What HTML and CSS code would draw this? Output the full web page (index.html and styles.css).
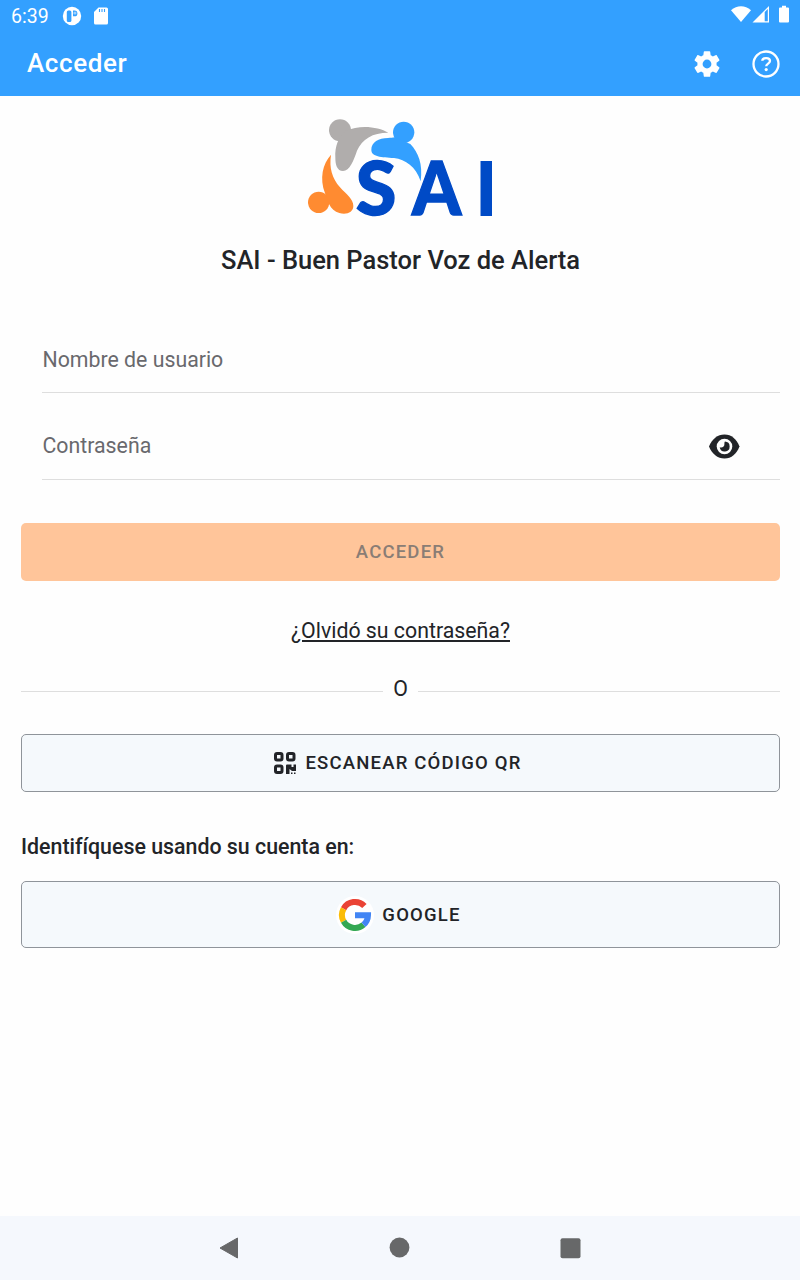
FILE: index.html
```html
<!DOCTYPE html>
<html lang="es">
<head>
  <meta charset="UTF-8">
  <meta name="viewport" content="width=device-width, initial-scale=1.0">
  <title>Acceder</title>
  <link rel="stylesheet" href="styles.css">
</head>
<body>
  <header class="header">
    <div class="status-bar">
      <span class="clock">6:39</span>
      <svg class="icon-app" width="20" height="20" viewBox="0 0 20 20">
        <circle cx="10" cy="10" r="9.2" fill="#fff"/>
        <rect x="4.8" y="4.5" width="4.6" height="11.5" rx="1.5" fill="#33a0ff"/>
        <path d="M11 4.5h1.500a2.900 2.900 0 0 1 0 5.800H11z" fill="#33a0ff"/>
        <circle cx="13" cy="7" r="1.6" fill="#9bd0ff"/>
      </svg>
      <svg class="icon-card" width="16" height="18" viewBox="0 0 16 18">
        <path d="M5.500.5h8a1.500 1.500 0 0 1 1.500 1.500v14a1.500 1.500 0 0 1-1.500 1.500h-11A1.500 1.500 0 0 1 1 16V5z" fill="#fff"/>
        <path d="M6.500 2v3M9 2v3M11.500 2v3" stroke="#33a0ff" stroke-width="1.1"/>
      </svg>
      <svg class="icon-signal" width="60" height="20" viewBox="0 0 60 20">
        <path d="M1 5.200C7-.1 15-.1 21 5.200L11 17z" fill="#fff"/>
        <path d="M22.500 17.500 39 1v16.500z" fill="#fff"/>
        <path d="M34.700 7 37.800 4v12.300h-3.100z" fill="#33a0ff"/>
        <path d="M49 3.500q0-1 1-1h2V.8h4v1.700h2q1 0 1 1v13q0 1-1 1h-8q-1 0-1-1z" fill="#fff"/>
      </svg>
    </div>
    <div class="toolbar">
      <h1>Acceder</h1>
      <svg class="icon-gear" width="32" height="32" viewBox="0 0 24 24">
        <path fill="#fff" d="M19.140 12.940c.04-.3.060-.61.060-.94 0-.32-.02-.64-.07-.94l2.030-1.580c.18-.14.230-.41.120-.61l-1.920-3.320c-.12-.22-.37-.29-.59-.22l-2.390.96c-.5-.38-1.030-.7-1.620-.94l-.36-2.540c-.04-.24-.24-.41-.48-.41h-3.840c-.24 0-.43.170-.47.410l-.36 2.540c-.59.240-1.130.570-1.620.94l-2.390-.96c-.22-.08-.47 0-.59.220L2.740 8.870c-.12.210-.08.470.12.610l2.030 1.580c-.05.300-.09.630-.09.940s.020.640.070.940l-2.030 1.580c-.18.140-.23.410-.12.610l1.920 3.320c.12.220.37.290.59.220l2.390-.96c.5.380 1.030.7 1.620.940l.36 2.540c.05.240.24.410.48.410h3.840c.24 0 .44-.17.470-.41l.36-2.540c.59-.24 1.130-.56 1.620-.94l2.390.96c.22.080.47 0 .59-.22l1.920-3.320c.12-.22.070-.47-.12-.61zM12 15.300A3.300 3.300 0 1 1 12 8.700a3.300 3.300 0 0 1 0 6.600z"/>
      </svg>
      <svg class="icon-help" width="28" height="28" viewBox="0 0 28 28" fill="none" stroke="#fff">
        <circle cx="14" cy="14" r="12.5" stroke-width="2.3"/>
        <path d="M10.300 10.800C10.400 7.300 18 7.200 18 11c0 2.700-3.800 2.500-3.800 5.300" stroke-width="2.3"/>
        <circle cx="14.2" cy="19.6" r="1.6" fill="#fff" stroke="none"/>
      </svg>
    </div>
  </header>

  <main class="login">
    <svg class="logo" width="210" height="125" viewBox="2 0 630 375">
      <g fill="#b0adac">
        <circle cx="134" cy="76" r="33"/>
        <path d="M120 158c-2-35 10-62 30-80 46-20 98-12 129 5-48 0-78 19-94 54-10 30-22 60-42 61-18 0-23-20-23-40z"/>
      </g>
      <g fill="#33a0ff">
        <circle cx="325" cy="82" r="32"/>
        <path d="M228 134c0-22 22-35 50-35 8 0 14-1 20-2l47 20c24 25 38 60 31 112-15-45-45-65-80-70-38-3-68-3-68-25z"/>
      </g>
      <g fill="#ff8b31">
        <circle cx="70" cy="292" r="32"/>
        <path d="M107 149c-6 40 3 70 27 98 20 22 40 36 40 56 0 18-20 28-42 21-14-4-24-13-31-27l-12-32C72 220 82 176 107 149z"/>
      </g>
      <g class="logo-text">
        <text class="logo-s" x="181" y="330" textLength="122" lengthAdjust="spacingAndGlyphs">S</text>
        <text class="logo-a" x="350" y="330" textLength="148" lengthAdjust="spacingAndGlyphs">A</text>
        <text x="538" y="332">I</text>
      </g>
    </svg>
    <h2>SAI - Buen Pastor Voz de Alerta</h2>

    <form>
      <div class="field">
        <span>Nombre de usuario</span>
      </div>
      <div class="field field-password">
        <span>Contraseña</span>
        <svg class="icon-eye" width="32" height="26" viewBox="0 0 32 26">
          <path d="M1 13.500C4 6 9.500 1.500 16.500 1.500s12 4.500 15 12c-3 7.500-8 12-15 12S4 21 1 13.500z" fill="#222428"/>
          <circle cx="16.5" cy="13.5" r="7.8" fill="#fff"/>
          <path d="M16.900 8.500a5 5 0 1 1-5.200 5.800c2.300 1 5.200-.8 4.700-3.500-.1-.9.100-1.500.5-2.300z" fill="#222428"/>
        </svg>
      </div>
      <button type="button" class="btn btn-login" disabled>Acceder</button>
    </form>

    <a class="forgot">¿Olvidó su contraseña?</a>

    <div class="divider"><span>O</span></div>

    <button type="button" class="btn btn-qr">
      <svg width="24" height="24" viewBox="0 0 24 24" fill="none" stroke="#222428" stroke-width="3">
        <rect x="2.5" y="2.5" width="6.5" height="6.5" rx="1.5"/>
        <rect x="14.5" y="2.5" width="6.500" height="6.5" rx="1.5"/>
        <rect x="2.5" y="15" width="6.5" height="6.5" rx="1.5"/>
        <path d="M13 23V14.500q0-1 1-1h4.500V16h2v-2.500H23V20h-4l-2.500-2v5zM18 21.500h1.500V23H18zM21 21.500h1.500V23H21z" fill="#222428" stroke="none"/>
      </svg>
      Escanear código QR
    </button>

    <h3>Identifíquese usando su cuenta en:</h3>

    <button type="button" class="btn btn-google">
      <svg width="34" height="34" viewBox="0 0 34 34" fill="none" stroke-width="6">
        <circle cx="17" cy="17" r="19" fill="#fff"/>
        <path d="M26.400 8A13 13 0 0 0 5.600 10.700" stroke="#ea4335"/>
        <path d="M5.600 10.700a13 13 0 0 0 0 12.600" stroke="#fbbc05"/>
        <path d="M5.600 23.300A13 13 0 0 0 25.500 26.800" stroke="#34a853"/>
        <path d="M25.500 26.800A13 13 0 0 0 30 17.200H17" stroke="#4285f4"/>
      </svg>
      Google
    </button>
  </main>

  <nav class="nav-bar">
    <svg width="20" height="22" viewBox="0 0 20 22"><path d="M1 11 18.500 1v20z" fill="#676869" stroke="#676869" stroke-linejoin="round"/></svg>
    <svg width="20" height="20" viewBox="0 0 20 20"><circle cx="9.5" cy="9.5" r="9.9" fill="#676869"/></svg>
    <svg width="20" height="20" viewBox="0 0 20 20"><rect x="-0.5" y="0.3" width="20" height="20" rx="2" fill="#676869"/></svg>
  </nav>
</body>
</html>
```
FILE: styles.css
```css
body {
  font-family: Roboto, "Liberation Sans", sans-serif;
  background-color: #fefefe;
  color: #222428;
  margin: 0;
  height: 1280px;
  display: flex;
  flex-direction: column;
}

svg {
  display: block;
  flex: none;
  overflow: visible;
}

.header {
  background-color: #33a0ff;
  color: #fff;
  height: 96px;
}

.status-bar {
  display: flex;
  align-items: center;
  height: 32px;
  padding: 0 10px 0 11px;
}

.clock {
  font-size: 19.5px;
  line-height: 32px;
  width: 51px;
  padding-top: 1px;
}

.icon-card {
  margin-left: 11px;
}

.icon-signal {
  margin-left: auto;
  margin-bottom: 2px;
}

.toolbar {
  display: flex;
  align-items: center;
  height: 64px;
  padding: 0 20px 0 27px;
}

.toolbar h1 {
  flex: 1;
  margin: 0 0 2px;
  font-size: 26px;
  font-weight: 500;
  letter-spacing: 0.6px;
}

.icon-gear {
  margin-right: 29px;
}

/* Login form */
.login {
  flex: 1;
  display: flex;
  flex-direction: column;
  padding: 9px 20px 0 21px;
}

.logo {
  align-self: center;
}

.logo-text {
  font-family: Lato, sans-serif;
  font-size: 228px;
  font-weight: 900;
  fill: #004ac6;
}

.logo-s,
.logo-a {
  font-size: 222px;
  stroke: #004ac6;
  stroke-width: 4px;
}

h2 {
  margin: 14px 0 44px;
  font-size: 25.5px;
  font-weight: 500;
  line-height: 32px;
  text-align: center;
}

.field {
  box-sizing: border-box;
  display: flex;
  align-items: center;
  justify-content: space-between;
  height: 73px;
  margin-left: 21px;
  padding: 6px 40px 0 0.5px;
  border-bottom: 1px solid #dedede;
  color: #69696d;
  font-size: 21.3px;
}

.field-password {
  margin-top: 14px;
}

.field-password span {
  margin-bottom: 2px;
}

.btn {
  box-sizing: border-box;
  display: flex;
  align-items: center;
  justify-content: center;
  gap: 10px;
  width: 100%;
  height: 58px;
  border: 1px solid #8f949a;
  border-radius: 5px;
  background-color: #f5f9fc;
  color: #222428;
  font-family: inherit;
  font-size: 18.5px;
  font-weight: 500;
  letter-spacing: 1.2px;
  text-transform: uppercase;
}

.btn-login {
  margin-top: 43px;
  border: none;
  background-color: #ffc59a;
  color: #8a7d75;
}

.forgot {
  align-self: center;
  margin-top: 34px;
  font-size: 21.3px;
  line-height: 32px;
  text-decoration: underline;
}

.divider {
  display: flex;
  align-items: center;
  gap: 10px;
  height: 32px;
  margin-top: 25px;
  font-size: 21.3px;
}

.divider::before,
.divider::after {
  content: "";
  flex: 1;
  height: 1px;
  margin-top: 6px;
  background-color: #dedede;
}

.btn-qr {
  gap: 8px;
  margin-top: 30px;
  padding-right: 12px;
}

h3 {
  margin: 39px 0 18px;
  font-size: 21.35px;
  font-weight: 500;
  line-height: 32px;
}

.btn-google {
  height: 67px;
  padding-right: 8px;
}

/* Android navigation */
.nav-bar {
  display: flex;
  align-items: center;
  justify-content: center;
  gap: 151px;
  height: 64px;
  background-color: #f5f8fd;
}
```
